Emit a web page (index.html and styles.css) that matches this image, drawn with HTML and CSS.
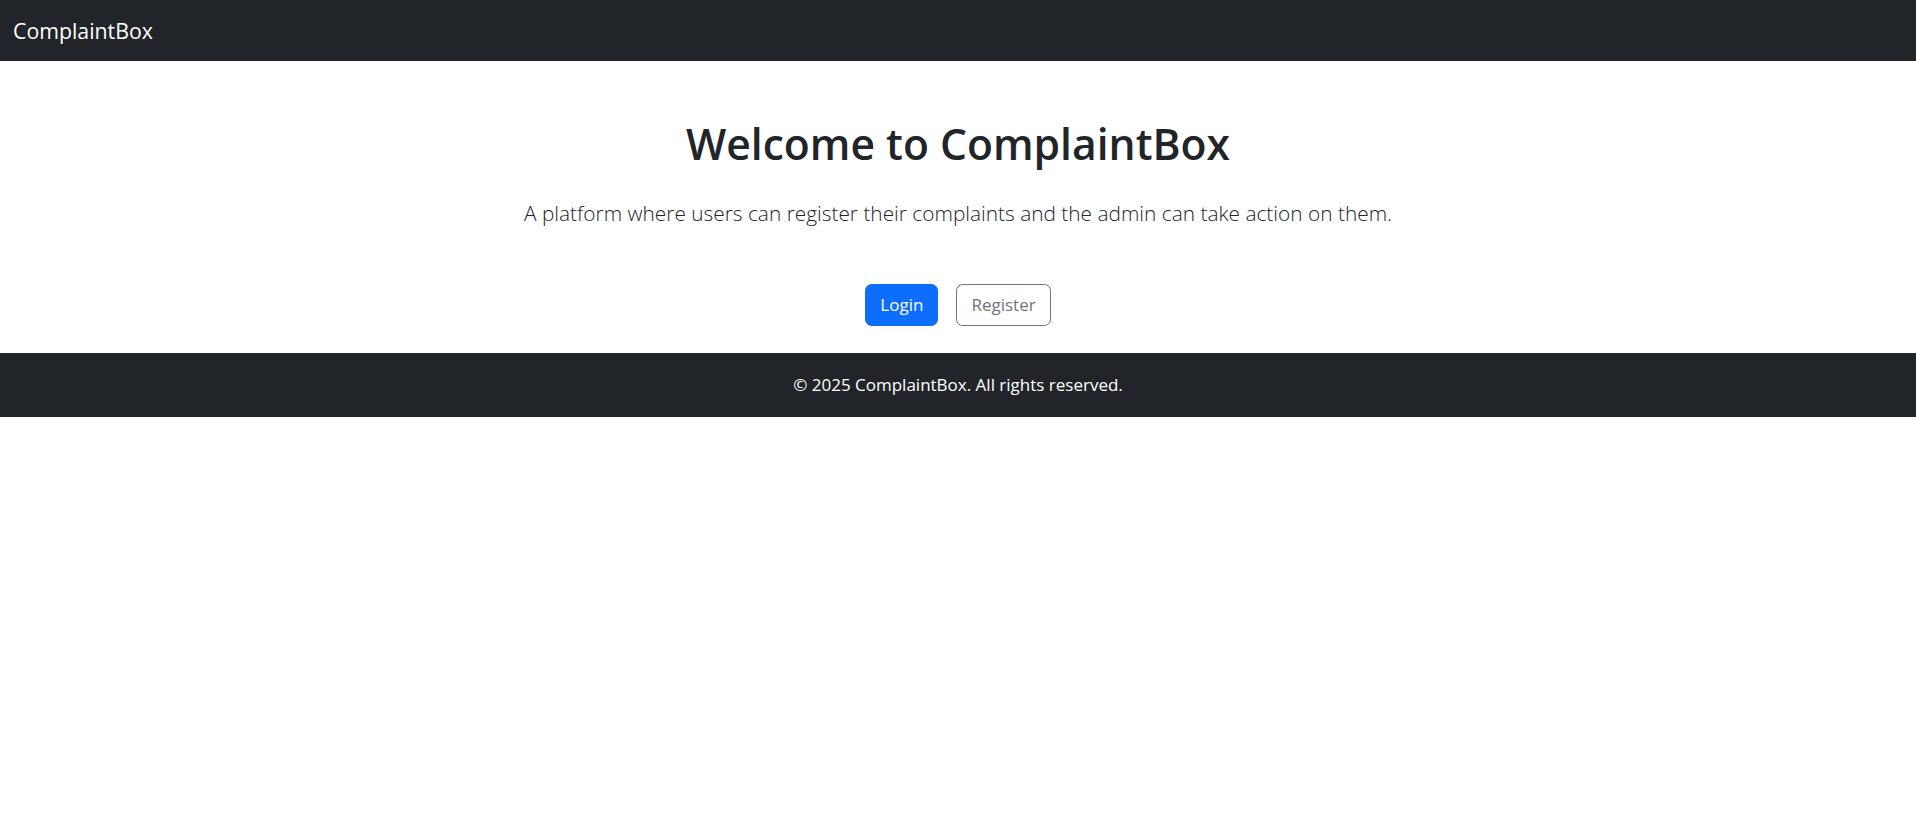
FILE: index.html
```html
<!DOCTYPE html>
<html lang="en">
<head>
<meta charset="utf-8">
<title>ComplaintBox</title>
<link rel="stylesheet" href="styles.css">
</head>
<body>
<nav class="navbar">
  <a class="brand" href="#">ComplaintBox</a>
</nav>
<main class="hero">
  <h1 class="hero-title">Welcome to ComplaintBox</h1>
  <p class="hero-lead">A platform where users can register their complaints and the admin can take action on them.</p>
  <div class="actions">
    <a class="btn btn-primary" href="#">Login</a>
    <a class="btn btn-outline" href="#">Register</a>
  </div>
</main>
<footer class="footer">
  <p class="footer-text">© 2025 ComplaintBox. All rights reserved.</p>
</footer>
</body>
</html>
```

FILE: styles.css
```css
* { box-sizing: border-box; }
html, body { margin: 0; padding: 0; }
body {
  font-family: "Open Sans", "Noto Sans", "Liberation Sans", sans-serif;
  color: #212529;
  background: #fff;
  font-size: 17.6px;
  line-height: 1.5;
}
.navbar {
  height: 61px;
  background: #212529;
  display: flex;
  align-items: center;
  padding: 0 13px;
}
.brand {
  color: #fff;
  text-decoration: none;
  font-size: 21.3px;
  line-height: 1;
}
.hero {
  display: flex;
  flex-direction: column;
  align-items: center;
  text-align: center;
  padding-top: 54px;
}
.hero-title {
  margin: 0;
  font-size: 42.6px;
  font-weight: 600;
  line-height: 57.6px;
}
.hero-lead {
  margin: 22px 0 0;
  font-size: 20.85px;
  font-weight: 300;
  line-height: 36px;
}
.actions {
  margin-top: 53px;
  display: flex;
  gap: 18px;
}
.btn {
  display: inline-block;
  height: 42px;
  padding: 0 14px;
  border: 1px solid transparent;
  border-radius: 6.6px;
  font-size: 17px;
  line-height: 40px;
  text-decoration: none;
}
.btn-primary {
  background: #0d6efd;
  border-color: #0d6efd;
  color: #fff;
}
.btn-outline {
  background: #fff;
  border-color: #6c757d;
  color: #6c757d;
}
.footer {
  margin-top: 27px;
  height: 64px;
  background: #212529;
  color: #fff;
  display: flex;
  align-items: center;
  justify-content: center;
}
.footer-text {
  margin: 0;
  font-size: 17px;
}
```
